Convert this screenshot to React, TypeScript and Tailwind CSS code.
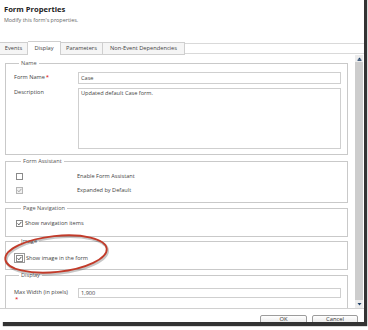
import React from 'react';

function Check({ disabled = false, checked = false }: { disabled?: boolean; checked?: boolean }) {
  return (
    <span
      className={`flex items-center justify-center w-[7px] h-[7px] border ${
        disabled ? 'border-[#b5b5b5] bg-[#f0f0f0]' : 'border-[#8a8a8a] bg-white'
      }`}
    >
      {checked && (
        <svg width="5" height="5" viewBox="0 0 5 5">
          <path
            d="M0.6 2.4 L1.9 3.8 L4.4 0.9"
            fill="none"
            stroke={disabled ? '#9a9a9a' : '#3a3a3a'}
            strokeWidth="0.9"
          />
        </svg>
      )}
    </span>
  );
}

function Group({
  title,
  className,
  children,
}: {
  title: string;
  className: string;
  children?: React.ReactNode;
}) {
  return (
    <fieldset className={`border border-[#c9c9c9] shrink-0 ${className}`}>
      <legend className="ml-[5px] px-[2px] text-[5.6px] leading-[8px] text-[#555]">{title}</legend>
      {children}
    </fieldset>
  );
}

export default function App() {
  const tabs = ['Events', 'Display', 'Parameters', 'Non-Event Dependencies'];
  const widths = ['w-[28px]', 'w-[33px]', 'w-[42px]', 'w-[82px]'];

  return (
    <div className="relative w-[368px] h-[330px] bg-white overflow-hidden font-['Open_Sans',sans-serif] text-[#444]">
      <div className="flex flex-col w-[364px] h-[326px] mt-[-4px] bg-white overflow-hidden shadow-[3px_4px_1px_rgba(0,0,0,0.8)]">
        {/* header */}
        <div className="h-[46px] pt-[8px] pl-[4px] shrink-0">
          <div className="text-[7.6px] leading-[10px] font-bold text-[#222]">Form Properties</div>
          <div className="mt-[2px] text-[5.4px] leading-[8px] text-[#666]">Modify this form's properties.</div>
        </div>

        {/* tabs */}
        <div className="flex h-[13px] shrink-0">
          {tabs.map((t, i) => (
            <div
              key={t}
              className={`${widths[i]} flex items-center justify-center text-[5.7px] text-[#444] border-t border-r border-[#cfcfcf] ${
                i === 1 ? 'bg-white mt-[-1px] h-[14px] border-b-0' : 'bg-[#f5f5f5] border-b'
              }`}
            >
              {t}
            </div>
          ))}
          <div className="flex-1 mt-[1px] h-[11px] border-t border-b border-[#d9d9d9]" />
        </div>

        {/* body */}
        <div className="flex h-[253px] shrink-0">
          <div className="w-[355px] overflow-hidden pl-[5px] pr-[7px] pt-[4px] flex flex-col">
            <Group title="Name" className="h-[96px] pt-[5px] pl-[8px] pr-[6px]">
              <div className="flex items-center h-[12px]">
                <div className="w-[64px] text-[5.6px] leading-none">
                  Form Name<span className="text-[#e00000] text-[6px] align-top relative top-[-1px] ml-[1px]">*</span>
                </div>
                <div className="w-[263px] h-[12px] border border-[#cfcfcf] flex items-center px-[2px] text-[5.6px]">
                  Case
                </div>
              </div>
              <div className="flex mt-[4px]">
                <div className="w-[64px] text-[5.6px] leading-[8px]">Description</div>
                <div className="w-[263px] h-[61px] border border-[#cfcfcf] px-[2px] text-[5.6px] leading-[8px]">
                  Updated default Case form.
                </div>
              </div>
            </Group>

            <Group title="Form Assistant" className="mt-[2px] h-[46px] pt-[6px] pl-[10px]">
              <div className="flex items-center h-[10px]">
                <div className="w-[61px]">
                  <Check />
                </div>
                <span className="text-[5.6px]">Enable Form Assistant</span>
              </div>
              <div className="flex items-center h-[10px] mt-[4px]">
                <div className="w-[61px]">
                  <Check disabled checked />
                </div>
                <span className="text-[5.6px]">Expanded by Default</span>
              </div>
            </Group>

            <Group title="Page Navigation" className="mt-[1px] h-[33px] pt-[7px] pl-[10px]">
              <div className="flex items-center h-[9px] gap-[2px]">
                <Check checked />
                <span className="text-[5.6px]">Show navigation items</span>
              </div>
            </Group>

            <Group title="Image" className="h-[33px] pt-[8px] pl-[8px]">
              <div className="flex items-center h-[10px]">
                <span className="flex items-center justify-center w-[11px] h-[10px] border border-[#9a9a9a]">
                  <Check checked />
                </span>
                <span className="text-[5.6px] ml-[1px]">Show image in the form</span>
              </div>
            </Group>

            <Group title="Display" className="mt-[1px] h-[50px] pt-[9px] pl-[8px] pr-[6px]">
              <div className="flex">
                <div className="w-[64px] text-[5.6px] leading-[7px] pt-[1px]">
                  Max Width (in pixels)
                  <div className="text-[#e00000] text-[6px] leading-[6px] pl-[1px]">*</div>
                </div>
                <div className="w-[263px] h-[10px] border border-[#cfcfcf] flex items-center px-[2px] text-[5.6px]">
                  1,900
                </div>
              </div>
            </Group>
          </div>

          {/* scrollbar */}
          <div className="w-[8px] flex flex-col bg-[#cdcdcd]">
            <div className="h-[7px] bg-[#ececec] flex items-center justify-center">
              <svg width="5" height="4" viewBox="0 0 5 4">
                <path d="M2.5 0.5 L4.5 2.8 L0.5 2.8 Z" fill="#1f3f66" />
                <rect x="0.5" y="3" width="4" height="0.8" fill="#1f3f66" />
              </svg>
            </div>
            <div className="flex-1" />
            <div className="h-[8px] bg-[#ececec] flex items-center justify-center">
              <svg width="5" height="4" viewBox="0 0 5 4">
                <path d="M0.5 1 L4.5 1 L2.5 3.5 Z" fill="#1f3f66" />
              </svg>
            </div>
          </div>
        </div>

        {/* footer */}
        <div className="flex-1 border-t border-[#d0d0d0] flex justify-end gap-[5px] pr-[6px] pt-[6px]">
          <button className="w-[47px] h-[11px] border border-[#9c9c9c] rounded-[2px] bg-gradient-to-b from-white to-[#e4e4e4] text-[5.8px] leading-[7px] text-[#333] flex justify-center">
            OK
          </button>
          <button className="w-[46px] h-[11px] border border-[#9c9c9c] rounded-[2px] bg-gradient-to-b from-white to-[#e4e4e4] text-[5.8px] leading-[7px] text-[#333] flex justify-center">
            Cancel
          </button>
        </div>
      </div>

      {/* red annotation ellipse */}
      <svg className="absolute left-0 top-0 pointer-events-none" width="368" height="330" viewBox="0 0 368 330">
        <ellipse
          cx="57"
          cy="255.5"
          rx="51"
          ry="18"
          transform="rotate(-6 57 255.5)"
          fill="none"
          stroke="rgba(0,0,0,0.22)"
          strokeWidth="2.5"
        />
        <ellipse
          cx="56"
          cy="254"
          rx="51"
          ry="18"
          transform="rotate(-6 56 254)"
          fill="none"
          stroke="#c23b2a"
          strokeWidth="1.8"
        />
      </svg>
    </div>
  );
}
